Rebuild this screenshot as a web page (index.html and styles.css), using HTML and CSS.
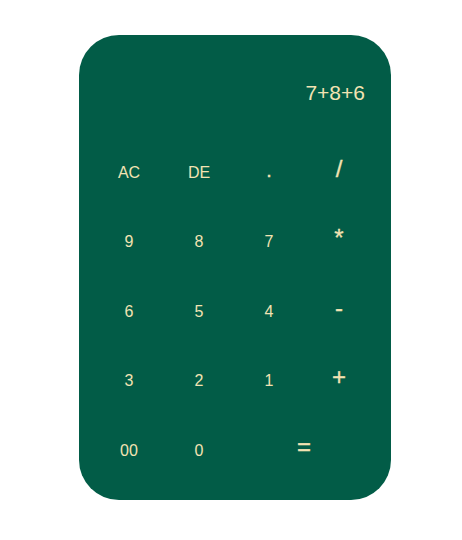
FILE: index.html
```html
<!DOCTYPE html>
<html>
<head>
<meta charset="utf-8">
<link rel="stylesheet" href="styles.css">
</head>
<body>
<div class="calc">
  <div class="display">7+8+6</div>
  <div class="keys">
    <button class="key">AC</button>
    <button class="key">DE</button>
    <button class="key dot">.</button>
    <button class="key op">/</button>
    <button class="key">9</button>
    <button class="key">8</button>
    <button class="key">7</button>
    <button class="key op">*</button>
    <button class="key">6</button>
    <button class="key">5</button>
    <button class="key">4</button>
    <button class="key op">-</button>
    <button class="key">3</button>
    <button class="key">2</button>
    <button class="key">1</button>
    <button class="key op">+</button>
    <button class="key">00</button>
    <button class="key">0</button>
    <button class="key op wide">=</button>
  </div>
</div>
</body>
</html>
```
FILE: styles.css
```css
html, body {
  margin: 0;
  background: #ffffff;
}
body {
  padding: 35px 0 0 79px;
  font-family: "Liberation Sans", Arial, sans-serif;
}
.calc {
  width: 312px;
  height: 465px;
  box-sizing: border-box;
  background: #025c47;
  border-radius: 40px;
  padding: 15px 16px 14px 15px;
  display: flex;
  flex-direction: column;
}
.display {
  height: 88px;
  display: flex;
  align-items: center;
  justify-content: flex-end;
  padding-right: 10px;
  padding-bottom: 2px;
  box-sizing: border-box;
  color: #f2e3b3;
  font-size: 21px;
}
.keys {
  display: grid;
  grid-template-columns: repeat(4, 70px);
  grid-auto-rows: 69.5px;
}
.key {
  background: none;
  border: none;
  padding: 0;
  margin: 0;
  color: #f2e3b3;
  font-family: "Liberation Sans", Arial, sans-serif;
  font-size: 16px;
  display: flex;
  align-items: center;
  justify-content: center;
}
.dot {
  font-size: 18px;
  -webkit-text-stroke: 0.5px #f2e3b3;
  padding-bottom: 3px;
}
.op {
  font-size: 24px;
  padding-bottom: 8px;
  -webkit-text-stroke: 0.3px #f2e3b3;
}
.wide {
  grid-column: span 2;
}
```
